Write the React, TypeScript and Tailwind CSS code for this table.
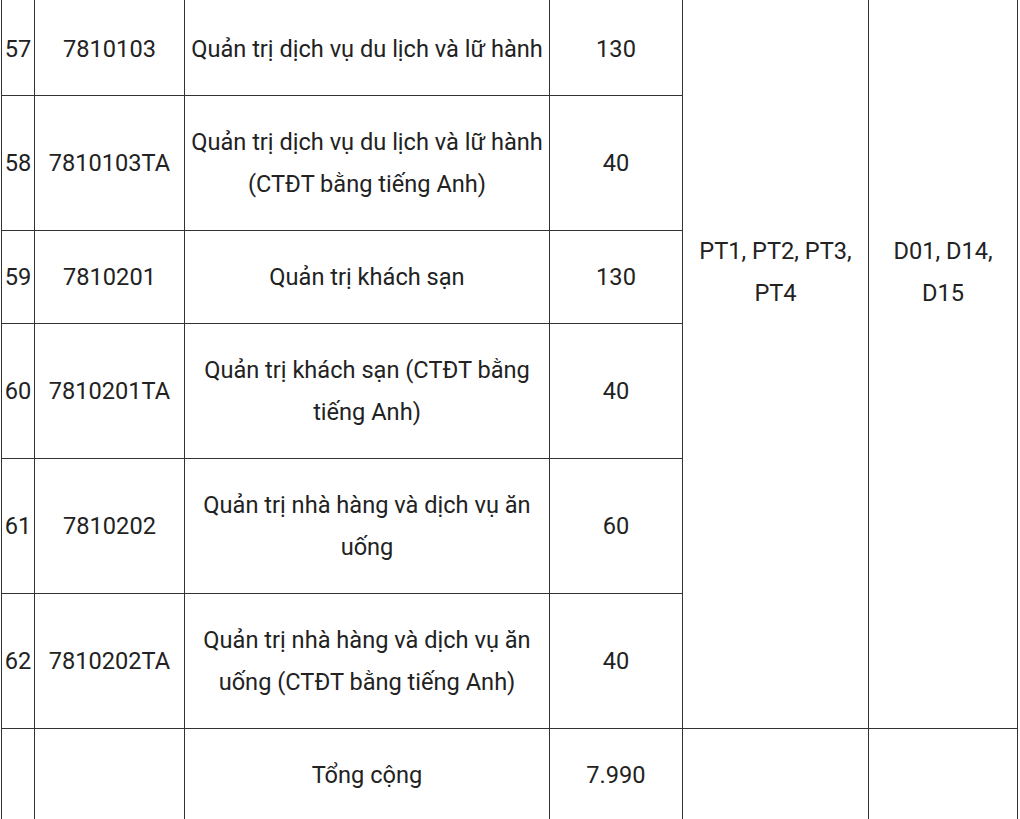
const rows = [
  { no: "57", code: "7810103", name: ["Quản trị dịch vụ du lịch và lữ hành"], qty: "130" },
  { no: "58", code: "7810103TA", name: ["Quản trị dịch vụ du lịch và lữ hành", "(CTĐT bằng tiếng Anh)"], qty: "40" },
  { no: "59", code: "7810201", name: ["Quản trị khách sạn"], qty: "130" },
  { no: "60", code: "7810201TA", name: ["Quản trị khách sạn (CTĐT bằng", "tiếng Anh)"], qty: "40" },
  { no: "61", code: "7810202", name: ["Quản trị nhà hàng và dịch vụ ăn", "uống"], qty: "60" },
  { no: "62", code: "7810202TA", name: ["Quản trị nhà hàng và dịch vụ ăn", "uống (CTĐT bằng tiếng Anh)"], qty: "40" },
];

const cell = "border border-[#333] px-0 py-[25px] text-center align-middle";
const firstCell = "border border-[#333] px-0 pt-[29px] pb-[25px] text-center align-middle";

export default function App() {
  return (
    <div className="h-[819px] w-[1020px] overflow-hidden bg-white">
      <table
        className="mt-[-2px] ml-[1px] w-[1016px] table-fixed border-collapse text-[23.6px] leading-[42px] text-[#222]"
        style={{ fontFamily: "Roboto, 'Liberation Sans', sans-serif" }}
      >
        <colgroup>
          <col className="w-[33px]" />
          <col className="w-[150px]" />
          <col className="w-[365px]" />
          <col className="w-[133px]" />
          <col className="w-[186px]" />
          <col className="w-[149px]" />
        </colgroup>
        <tbody>
          {rows.map((r, i) => {
            const c = i === 0 ? firstCell : cell;
            return (
              <tr key={r.no}>
                <td className={c}>{r.no}</td>
                <td className={c}>{r.code}</td>
                <td className={c}>
                  {r.name.map((l) => (
                    <div key={l} className="whitespace-nowrap">{l}</div>
                  ))}
                </td>
                <td className={c}>{r.qty}</td>
                {i === 0 && (
                  <>
                    <td rowSpan={6} className="border border-[#333] pt-[231px] text-center align-top">
                      <div>PT1, PT2, PT3,</div>
                      <div>PT4</div>
                    </td>
                    <td rowSpan={6} className="border border-[#333] pt-[231px] text-center align-top">
                      <div>D01, D14,</div>
                      <div>D15</div>
                    </td>
                  </>
                )}
              </tr>
            );
          })}
          <tr>
            <td className={cell}></td>
            <td className={cell}></td>
            <td className={cell}>Tổng cộng</td>
            <td className={cell}>7.990</td>
            <td className={cell}></td>
            <td className={cell}></td>
          </tr>
        </tbody>
      </table>
    </div>
  );
}
